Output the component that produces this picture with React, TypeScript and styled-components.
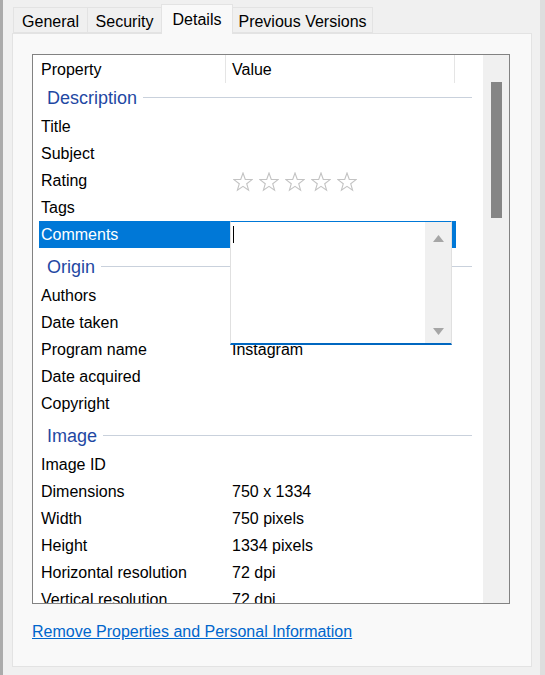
import * as React from 'react';
import styled, { createGlobalStyle } from 'styled-components';

const GlobalStyle = createGlobalStyle`
    html, body {
        margin: 0;
        padding: 0;
        background: #f0f0f0;
    }
    body {
        font-family: "Liberation Sans", Arial, sans-serif;
        font-size: 16px;
        color: #000;
    }
`;

const Window = styled.div`
    width: 545px;
    height: 675px;
    display: flex;
    overflow: hidden;
    background: #f0f0f0;
`;

const Edge = styled.div<{ w: number; color: string }>`
    width: ${({ w }) => w}px;
    flex: none;
    background: ${({ color }) => color};
`;

const Main = styled.div`
    flex: 1;
    display: flex;
    flex-direction: column;
    padding: 0 8px 0 9px;
`;

const TabStrip = styled.div`
    height: 33px;
    display: flex;
    align-items: flex-end;
    padding-left: 2px;
    position: relative;
    z-index: 1;
`;

const Tab = styled.div<{ w: number; active?: boolean }>`
    box-sizing: border-box;
    width: ${({ w }) => w}px;
    height: ${({ active }) => active ? '30px' : '26px'};
    margin-bottom: ${({ active }) => active ? '-1px' : '0'};
    display: flex;
    align-items: center;
    justify-content: center;
    padding-top: ${({ active }) => active ? '0' : '4px'};
    background: ${({ active }) => active ? '#f9f9f9' : '#f0f0f0'};
    border: 1px solid #e3e3e3;
    border-bottom: ${({ active }) => active ? 'none' : '1px solid #e3e3e3'};
    margin-left: -1px;
    white-space: nowrap;
`;

const Panel = styled.div`
    box-sizing: border-box;
    height: 634px;
    background: #f9f9f9;
    border: 1px solid #e3e3e3;
    padding: 20px 0 0 19px;
    display: flex;
    flex-direction: column;
`;

const ListBox = styled.div`
    position: relative;
    box-sizing: border-box;
    width: 478px;
    height: 550px;
    border: 1px solid #828282;
    background: #fff;
    display: flex;
`;

const ListContent = styled.div`
    width: 450px;
    overflow: hidden;
`;

const Track = styled.div`
    width: 26px;
    background: #f0f0f0;
    display: flex;
    justify-content: center;
    padding-top: 27px;
`;

const Thumb = styled.div`
    width: 11px;
    height: 136px;
    background: #858585;
`;

const HeaderRow = styled.div`
    height: 28px;
    display: flex;
`;

const HeaderCell = styled.div<{ w: number; pad: number }>`
    box-sizing: border-box;
    width: ${({ w }) => w}px;
    padding: 2px 0 0 ${({ pad }) => pad}px;
    display: flex;
    align-items: center;
    border-right: 1px solid #e5e5e5;
`;

const GroupHeading = styled.div<{ first?: boolean }>`
    height: 30px;
    margin-top: ${({ first }) => first ? '0' : '4px'};
    display: flex;
    align-items: center;
    padding: 0 11px 0 14px;
    font-size: 18px;
    color: #1f48a3;
`;

const HeadingLine = styled.div`
    flex: 1;
    height: 1px;
    margin: 0 0 1px 6px;
    background: #c9d1dc;
`;

const Row = styled.div<{ selected?: boolean }>`
    width: 417px;
    height: 27px;
    margin-left: 6px;
    display: flex;
    align-items: center;
    background: ${({ selected }) => selected ? '#0078d7' : 'transparent'};
    color: ${({ selected }) => selected ? '#fff' : '#000'};
`;

const NameCell = styled.div`
    width: 187px;
    box-sizing: border-box;
    padding-left: 2px;
    white-space: nowrap;
`;

const ValueCell = styled.div`
    flex: 1;
    padding-left: 6px;
    display: flex;
    align-items: center;
    white-space: nowrap;
`;

const Stars = styled.div`
    display: flex;
    gap: 6px;
    margin-left: 1px;
    margin-top: 2px;
`;

const Editor = styled.div`
    position: absolute;
    left: 197px;
    top: 166px;
    width: 222px;
    height: 124px;
    box-sizing: border-box;
    background: #fff;
    border-top: 1px solid #0078d7;
    border-left: 1px solid #e0e0e0;
    border-right: 1px solid #e0e0e0;
    border-bottom: 2px solid #0067c0;
    display: flex;
`;

const EditorText = styled.div`
    flex: 1;
    padding: 4px 0 0 2px;
`;

const Caret = styled.div`
    width: 1px;
    height: 17px;
    background: #000;
`;

const EditorScroll = styled.div`
    width: 26px;
    background: #f0f0f0;
    display: flex;
    flex-direction: column;
    align-items: center;
    justify-content: space-between;
    padding: 13px 0 8px;
`;

const LinkText = styled.a`
    margin-top: 19px;
    align-self: flex-start;
    color: #0066cc;
    text-decoration: underline;
    font-size: 16px;
    line-height: 18px;
    cursor: pointer;
`;

const Star = () => (
    <svg width="20" height="20" viewBox="0 0 20 20">
        <path
            d="M10 1 L12.29 7.34 L19.03 7.56 L13.71 11.71 L15.58 18.19 L10 14.4 L4.42 18.19 L6.29 11.71 L0.97 7.56 L7.71 7.34 Z"
            fill="none"
            stroke="#c3c3c3"
            strokeWidth="1.1"
            strokeLinejoin="miter"
        />
    </svg>
);

const Arrow = ({ down }: { down?: boolean }) => (
    <svg width="11" height="7" viewBox="0 0 11 7">
        <path d={down ? 'M0 0 L11 0 L5.5 7 Z' : 'M0 7 L11 7 L5.5 0 Z'} fill="#a6a6a6" />
    </svg>
);

type Item = { name: string; value?: string; stars?: boolean; selected?: boolean };
type Group = { title: string; items: Item[] };

const groups: Group[] = [
    {
        title: 'Description',
        items: [
            { name: 'Title' },
            { name: 'Subject' },
            { name: 'Rating', stars: true },
            { name: 'Tags' },
            { name: 'Comments', selected: true },
        ],
    },
    {
        title: 'Origin',
        items: [
            { name: 'Authors' },
            { name: 'Date taken' },
            { name: 'Program name', value: 'Instagram' },
            { name: 'Date acquired' },
            { name: 'Copyright' },
        ],
    },
    {
        title: 'Image',
        items: [
            { name: 'Image ID' },
            { name: 'Dimensions', value: '750 x 1334' },
            { name: 'Width', value: '750 pixels' },
            { name: 'Height', value: '1334 pixels' },
            { name: 'Horizontal resolution', value: '72 dpi' },
            { name: 'Vertical resolution', value: '72 dpi' },
        ],
    },
];

const tabs = [
    { label: 'General', w: 75 },
    { label: 'Security', w: 75 },
    { label: 'Details', w: 72, active: true },
    { label: 'Previous Versions', w: 141 },
];

export default function App() {
    return (
        <Window>
            <GlobalStyle />
            <Edge w={3} color="#ababab" />
            <Main>
                <TabStrip>
                    {tabs.map(t => (
                        <Tab key={t.label} w={t.w} active={t.active}>{t.label}</Tab>
                    ))}
                </TabStrip>
                <Panel>
                    <ListBox>
                        <ListContent>
                            <HeaderRow>
                                <HeaderCell w={193} pad={8}>Property</HeaderCell>
                                <HeaderCell w={229} pad={6}>Value</HeaderCell>
                            </HeaderRow>
                            {groups.map((g, gi) => (
                                <React.Fragment key={g.title}>
                                    <GroupHeading first={gi === 0}>
                                        {g.title}
                                        <HeadingLine />
                                    </GroupHeading>
                                    {g.items.map(it => (
                                        <Row key={it.name} selected={it.selected}>
                                            <NameCell>{it.name}</NameCell>
                                            <ValueCell>
                                                {it.stars ? (
                                                    <Stars>
                                                        {[0, 1, 2, 3, 4].map(i => <Star key={i} />)}
                                                    </Stars>
                                                ) : it.value}
                                            </ValueCell>
                                        </Row>
                                    ))}
                                </React.Fragment>
                            ))}
                        </ListContent>
                        <Track>
                            <Thumb />
                        </Track>
                        <Editor>
                            <EditorText>
                                <Caret />
                            </EditorText>
                            <EditorScroll>
                                <Arrow />
                                <Arrow down />
                            </EditorScroll>
                        </Editor>
                    </ListBox>
                    <LinkText>Remove Properties and Personal Information</LinkText>
                </Panel>
            </Main>
            <Edge w={5} color="#dedede" />
        </Window>
    );
}
